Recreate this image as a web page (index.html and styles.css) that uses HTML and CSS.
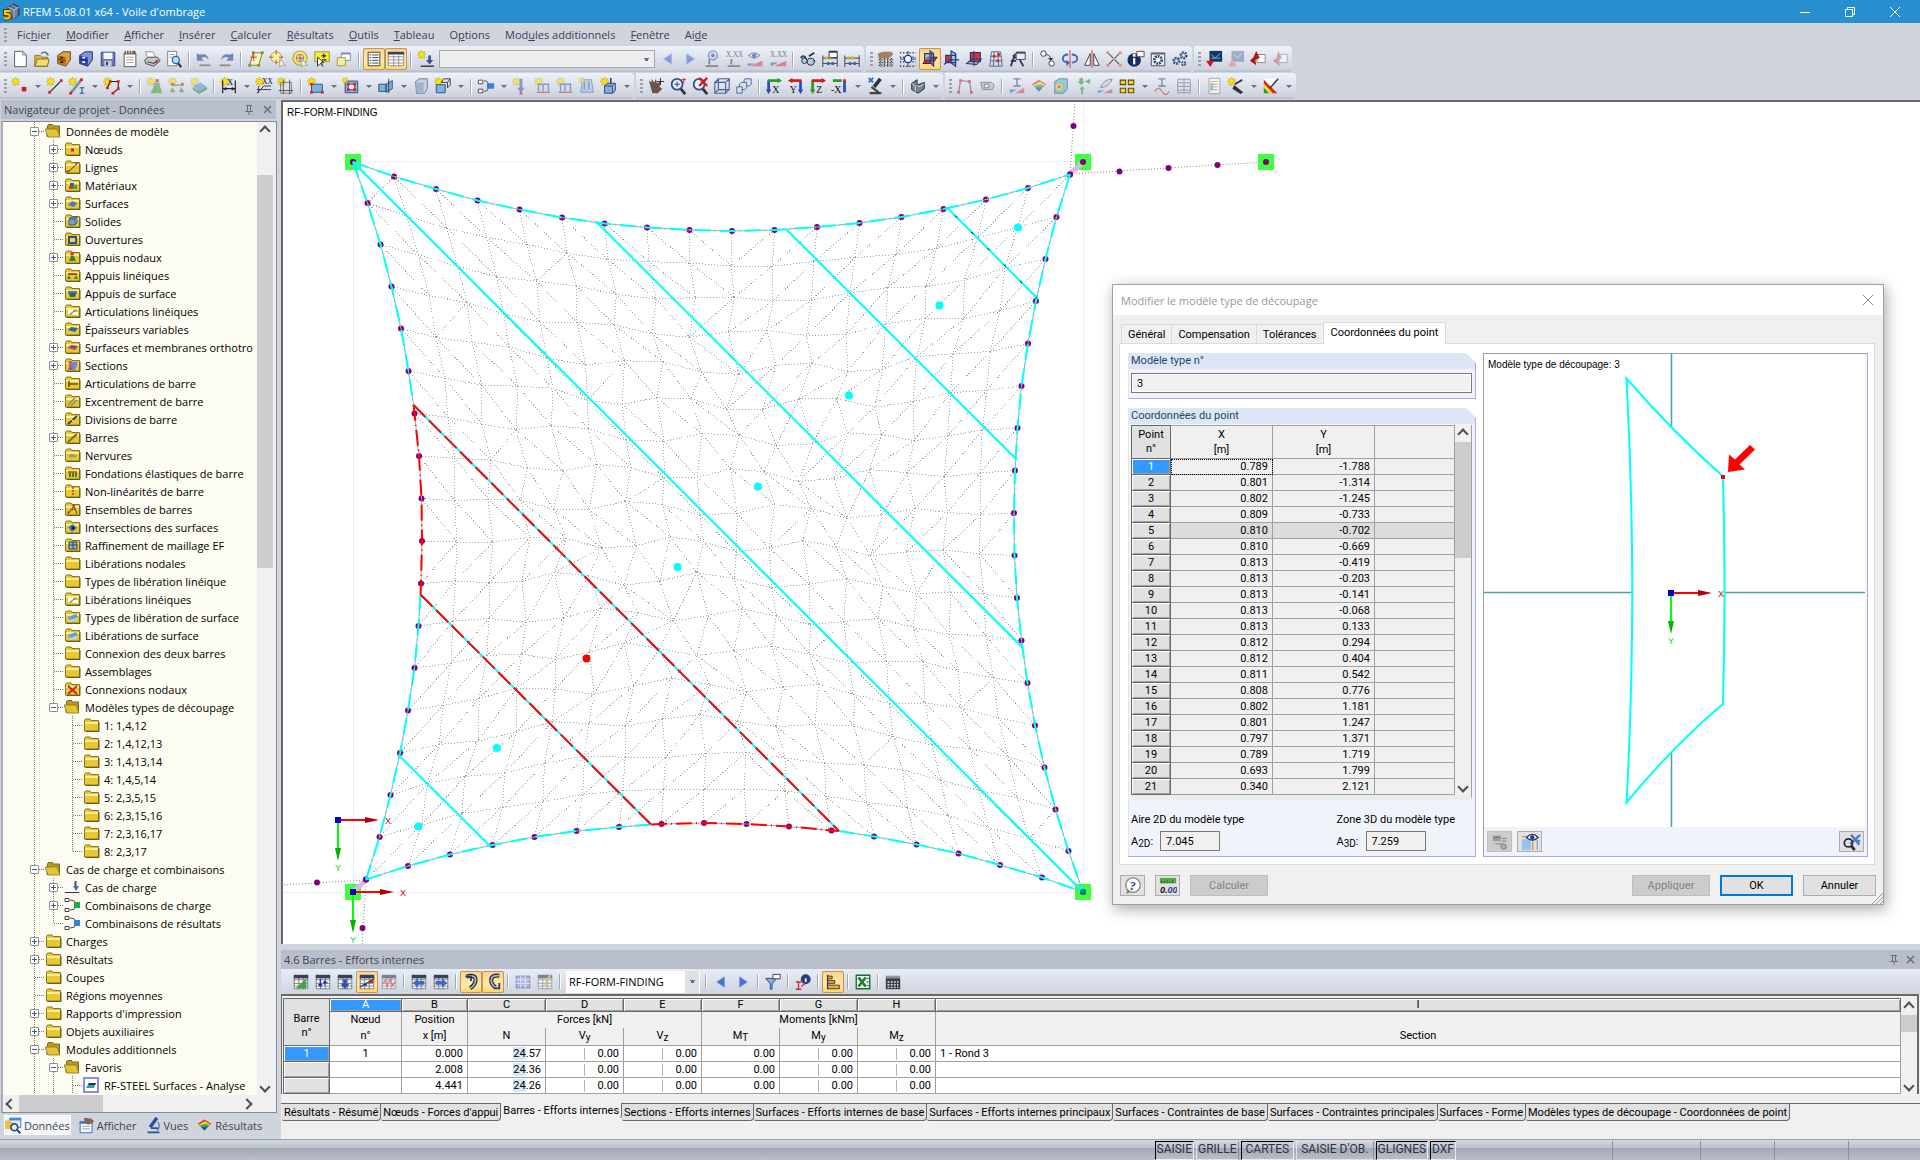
FILE: index.html
```
<!DOCTYPE html>
<html lang="fr">
<head>
    <meta charset="UTF-8">
    <meta name="viewport" content="width=device-width, initial-scale=1.0">
    <title>RFEM 5.08.01 x64 - Voile d'ombrage</title>
    <link rel="stylesheet" href="styles.css">
</head>
<body>
    <header class="titlebar">
        <svg class="app-icon" viewBox="0 0 18 18"><path d="M6 4l6-3 5 3v8l-5 4-6-3z" fill="#5b6b86" stroke="#2c3548"/><path d="M6 4l6 3 5-3M12 7v9" stroke="#b9c6da" fill="none"/><path d="M9 2l6 3M9 6v8M14 6v8" stroke="#8d9cb5"/><path d="M8 8H3v3h3q3 1 1 4-2 1-5 0" stroke="#4a3c00" stroke-width="4" fill="none"/><path d="M8 8H3v3h3q3 1 1 4-2 1-5 0" stroke="#ffc800" stroke-width="2" fill="none"/></svg>
        <span class="titlebar-text">RFEM 5.08.01 x64 - Voile d'ombrage</span>
        <button class="win-btn" aria-label="Réduire"><svg width="12" height="12"><path d="M1 6.5h10" stroke="#fff"/></svg></button>
        <button class="win-btn" aria-label="Restaurer"><svg width="12" height="12"><path d="M3.500 3.500v-2h7v7h-2M1.500 3.500h7v7h-7z" stroke="#fff" fill="none"/></svg></button>
        <button class="win-btn" aria-label="Fermer"><svg width="12" height="12"><path d="M1 1l10 10M11 1L1 11" stroke="#fff" fill="none"/></svg></button>
    </header>

    <nav class="menu">
        <span class="grip"></span>
        <button>Fic<u>h</u>ier</button>
        <button><u>M</u>odifier</button>
        <button><u>A</u>fficher</button>
        <button><u>I</u>nsérer</button>
        <button><u>C</u>alculer</button>
        <button><u>R</u>ésultats</button>
        <button><u>O</u>utils</button>
        <button><u>T</u>ableau</button>
        <button>O<u>p</u>tions</button>
        <button>Mod<u>u</u>les additionnels</button>
        <button><u>F</u>enêtre</button>
        <button>Ai<u>d</u>e</button>
    </nav>

    <div class="bar">
        <div class="band">
            <div class="tools" data-tools="new open box boxblue save clip print preview | undo redo | para pick ring note wins | *list *table | load"></div>
            <select class="combo combo-main" aria-label="Cas de charge"><option></option></select>
            <div class="tools" data-tools="~prev ~next ~eyeload ~xload ~eyered ~xred | glasses abacuswin abacus"></div>
        </div>
        <div class="band">
            <div class="tools" data-tools="hand gridc *planered planetwo planefill meshgrid props | copy rotate mirror cross info calc gears"></div>
        </div>
        <div class="band">
            <div class="tools" data-tools="modred ~modpink redout ~redpink"></div>
        </div>
    </div>
    <div class="bar">
        <div class="band">
            <div class="tools" data-tools="node v line member v poly v | ~support ~lsupport ~ssupport | dim v dimx section | surf v opening v sweep v solid solidset v | combi v ~nload ~lload ~lload ~sload cubeload v"></div>
        </div>
        <div class="band">
            <div class="tools" data-tools="pan zoomin zoomx cube cubes | axx axy axz axmx v scope v | solidgrey v"></div>
        </div>
        <div class="band">
            <div class="tools" data-tools="~deform ~cam | ~ibeam ~rainbow ~raincube ~greens ~leaf yellows v ~idiag ~tablegrid | ~doc wand v colors v"></div>
        </div>
    </div>

    <main class="workspace">
        <aside class="navigator">
            <div class="pane-title">
                <span>Navigateur de projet - Données</span>
                <svg width="36" height="14"><path d="M8 2.500h6M9.500 2v6M12.500 2v6M7 8.500h8M11 8v4" stroke="#6a6e78" fill="none"/><path d="M26 3l7 7M33 3l-7 7" stroke="#6a6e78" stroke-width="1.500"/></svg>
            </div>
            <div class="tree-frame">
                <div class="tree-row">
                    <div class="tree" id="tree" role="tree"></div>
                    <div class="vscroll">
                        <button class="arrow up" aria-label="Haut"></button>
                        <div class="thumb nav-thumb"></div>
                        <button class="arrow down" aria-label="Bas"></button>
                    </div>
                </div>
                <div class="hscroll">
                    <button class="arrow left" aria-label="Gauche"></button>
                    <div class="thumb"></div>
                    <button class="arrow right" aria-label="Droite"></button>
                </div>
            </div>
            <div class="nav-tabs">
                <button class="nav-tab active"><i data-icon="tabdata"></i>Données</button>
                <button class="nav-tab"><i data-icon="tabview"></i>Afficher</button>
                <button class="nav-tab"><i data-icon="tabscope"></i>Vues</button>
                <button class="nav-tab"><i data-icon="rainbow"></i>Résultats</button>
            </div>
        </aside>

        <section class="content">
            <div class="viewport">
                <svg class="model" id="model"></svg>
                <span class="view-label">RF-FORM-FINDING</span>
            </div>

            <div class="results">
                <div class="pane-title">
                    <span>4.6 Barres - Efforts internes</span>
                    <svg width="36" height="14"><path d="M9 2.500h6M10.500 2v6M13.500 2v6M8 8.500h8M12 8v4" stroke="#6a6e78" fill="none"/><path d="M25 3l7 7M32 3l-7 7" stroke="#6a6e78" stroke-width="1.500"/></svg>
                </div>
                <div class="results-tools">
                    <div class="tools" data-tools="gtri garrow gdown *gdiag ~gred | gleft gright | *hook *hookback | ~gblue ~gedit |"></div>
                    <select class="combo combo-case" aria-label="Cas"><option>RF-FORM-FINDING</option></select>
                    <div class="tools" data-tools="| prev next | filter | infored | *bars | excel | calcu"></div>
                </div>
                <div class="sheet">
                    <table class="grid">
                        <colgroup><col class="c-head"><col class="c-a"><col class="c-b"><col class="c-n"><col class="c-n"><col class="c-n"><col class="c-n"><col class="c-n"><col class="c-n"><col></colgroup>
                        <thead>
                            <tr class="letters"><th class="corner" rowspan="3">Barre<br>n°</th><th class="sel">A</th><th>B</th><th>C</th><th>D</th><th>E</th><th>F</th><th>G</th><th>H</th><th>I</th></tr>
                            <tr class="names"><th>Nœud</th><th>Position</th><th colspan="3">Forces [kN]</th><th colspan="3">Moments [kNm]</th><th></th></tr>
                            <tr class="units"><th>n°</th><th>x [m]</th><th>N</th><th>V<sub>y</sub></th><th>V<sub>z</sub></th><th>M<sub>T</sub></th><th>M<sub>y</sub></th><th>M<sub>z</sub></th><th>Section</th></tr>
                        </thead>
                        <tbody>
                            <tr><th class="sel">1</th><td class="mid">1</td><td>0.000</td><td><b>24</b>.57</td><td class="tick">0.00</td><td class="tick">0.00</td><td>0.00</td><td class="tick">0.00</td><td class="tick">0.00</td><td class="txt">1 - Rond 3</td></tr>
                            <tr><th></th><td></td><td>2.008</td><td><b>24</b>.36</td><td class="tick">0.00</td><td class="tick">0.00</td><td>0.00</td><td class="tick">0.00</td><td class="tick">0.00</td><td></td></tr>
                            <tr><th></th><td></td><td>4.441</td><td><b>24</b>.26</td><td class="tick">0.00</td><td class="tick">0.00</td><td>0.00</td><td class="tick">0.00</td><td class="tick">0.00</td><td></td></tr>
                        </tbody>
                    </table>
                    <div class="vscroll">
                        <button class="arrow up" aria-label="Haut"></button>
                        <div class="thumb sheet-thumb"></div>
                        <button class="arrow down" aria-label="Bas"></button>
                    </div>
                </div>
                <div class="sheet-tabs">
                    <button>Résultats - Résumé</button>
                    <button>Nœuds - Forces d'appui</button>
                    <button class="active">Barres - Efforts internes</button>
                    <button>Sections - Efforts internes</button>
                    <button>Surfaces - Efforts internes de base</button>
                    <button>Surfaces - Efforts internes principaux</button>
                    <button>Surfaces - Contraintes de base</button>
                    <button>Surfaces - Contraintes principales</button>
                    <button>Surfaces - Forme</button>
                    <button>Modèles types de découpage - Coordonnées de point</button>
                </div>
            </div>
        </section>
    </main>

    <footer class="status">
        <span class="cell on">SAISIE</span>
        <span class="cell">GRILLE</span>
        <span class="cell on wide">CARTES</span>
        <span class="cell wide">SAISIE D'OB.</span>
        <span class="cell on">GLIGNES</span>
        <span class="cell on">DXF</span>
        <span class="blank blank-first"></span>
        <span class="blank blank-wide"></span>
        <span class="blank"></span>
        <span class="blank"></span>
        <span class="blank"></span>
    </footer>

    <div class="dialog" role="dialog" aria-labelledby="dialogTitle">
        <div class="dialog-title">
            <span id="dialogTitle">Modifier le modèle type de découpage</span>
            <button aria-label="Fermer"><svg width="12" height="12"><path d="M1 1l10 10M11 1L1 11" stroke="#8a8a8a" fill="none"/></svg></button>
        </div>
        <div class="dialog-tabs">
            <button>Général</button>
            <button>Compensation</button>
            <button>Tolérances</button>
            <button class="active">Coordonnées du point</button>
        </div>
        <div class="dialog-page">
            <div class="dialog-left">
                <div class="group">
                    <label class="group-title" for="modelNo">Modèle type n°</label>
                    <input class="model-no" id="modelNo" type="text" value="3" readonly>
                </div>
                <div class="group grow">
                    <div class="group-title">Coordonnées du point</div>
                    <div class="points-frame">
                        <table class="grid points">
                            <colgroup><col class="p-head"><col class="p-n"><col class="p-n"><col></colgroup>
                            <thead><tr><th class="corner">Point<br>n°</th><th><span>X</span>[m]</th><th><span>Y</span>[m]</th><th></th></tr></thead>
                            <tbody id="points"></tbody>
                        </table>
                        <div class="vscroll">
                            <button class="arrow up" aria-label="Haut"></button>
                            <div class="thumb points-thumb"></div>
                            <button class="arrow down" aria-label="Bas"></button>
                        </div>
                    </div>
                    <div class="areas">
                        <div class="area">
                            <span>Aire 2D du modèle type</span>
                            <div class="area-field"><label for="a2d">A<sub>2D</sub>:</label><input id="a2d" type="text" value="7.045" readonly></div>
                        </div>
                        <div class="area">
                            <span>Zone 3D du modèle type</span>
                            <div class="area-field"><label for="a3d">A<sub>3D</sub>:</label><input id="a3d" type="text" value="7.259" readonly></div>
                        </div>
                    </div>
                </div>
            </div>
            <div class="preview">
                <div class="preview-canvas">
                    <svg class="pattern" id="pattern"></svg>
                    <span class="view-label">Modèle type de découpage: 3</span>
                </div>
                <div class="preview-tools">
                    <button class="icon-btn off" aria-label="Points"><i data-icon="pvgrey"></i></button>
                    <button class="icon-btn" aria-label="Affichage"><i data-icon="pveye"></i></button>
                    <button class="icon-btn last" aria-label="Tout afficher"><i data-icon="pvzoom"></i></button>
                </div>
            </div>
        </div>
        <div class="dialog-footer">
            <button class="icon-btn" aria-label="Aide"><i data-icon="help"></i></button>
            <button class="icon-btn" aria-label="Unités"><i data-icon="units"></i></button>
            <button class="push" disabled>Calculer</button>
            <span class="spacer"></span>
            <button class="push" disabled>Appliquer</button>
            <button class="push primary">OK</button>
            <button class="push narrow">Annuler</button>
        </div>
        <svg class="resize-grip" width="12" height="12"><path d="M1 12L12 1M5 12l7-7M9 12l3-3" stroke="#999"/></svg>
    </div>

    <script src="script.js"></script>
</body>
</html>
```

FILE: styles.css
```
* {
    box-sizing: border-box;
}

body {
    margin: 0;
    height: 100vh;
    display: flex;
    flex-direction: column;
    overflow: hidden;
    position: relative;
    background: #d0d4dd;
    color: #000;
    font-family: "Open Sans", sans-serif;
    font-size: 11px;
}

button, input, select {
    font: inherit;
    color: inherit;
    border: none;
    padding: 0;
    margin: 0;
    background: none;
    white-space: nowrap;
}

/* title bar */
.titlebar {
    height: 23px;
    flex: none;
    display: flex;
    align-items: center;
    background: #278fd0;
    color: #fff;
    padding: 0 3px 0 2px;
}

.app-icon {
    width: 18px;
    height: 18px;
    margin-right: 3px;
}

.titlebar-text {
    flex: 1;
}

.win-btn {
    width: 45px;
    height: 21px;
    display: flex;
    align-items: center;
    justify-content: center;
}

/* menu */
.menu {
    height: 23px;
    flex: none;
    display: flex;
    align-items: center;
    gap: 15px;
    color: #3c4258;
}

.menu .grip {
    margin-right: -5px;
}

.grip {
    width: 3px;
    height: 14px;
    margin-left: 4px;
    background: repeating-linear-gradient(#9aa0ae 0 2px, transparent 2px 4px);
}

/* toolbars */
.bar {
    height: 26px;
    flex: none;
    display: flex;
    gap: 2px;
    margin-bottom: 1px;
}

.band {
    display: flex;
    align-items: center;
    height: 26px;
    padding-right: 1px;
    border-radius: 0 4px 4px 0;
    background: linear-gradient(#eef2fa, #dde2ec 45%, #cdd2de 90%, #b4b9c4);
}

.band::before {
    content: "";
    width: 3px;
    height: 15px;
    margin: 0 2px 0 4px;
    background: repeating-linear-gradient(#9aa0ae 0 2px, transparent 2px 4px);
}

.tools {
    display: flex;
    align-items: center;
}

.tool {
    width: 22px;
    height: 22px;
    display: flex;
    align-items: center;
    justify-content: center;
    border-radius: 2px;
}

.tool svg {
    width: 18px;
    height: 18px;
}

.tool.on {
    background: linear-gradient(#fbd08b, #ffe9a8 60%, #ffd565);
    box-shadow: inset 0 0 0 1px #c2955a;
}

.tool.off svg {
    opacity: 0.6;
}

.sep {
    width: 2px;
    height: 15px;
    margin: 0 3px;
    background: linear-gradient(90deg, #a3a9b6 50%, #fff 50%);
}

.drop {
    width: 13px;
    display: flex;
    justify-content: center;
}

.drop::before {
    content: "";
    border: 3px solid transparent;
    border-top-color: #6b6f79;
    border-bottom: 0;
}

.combo {
    appearance: none;
    height: 18px;
    margin: 0 2px;
    padding: 0 4px;
    border: 1px solid #a6a9b0;
    border-radius: 0;
    background-color: #eee;
    background-image: linear-gradient(#6b6f79, #6b6f79), linear-gradient(#6b6f79, #6b6f79);
    background-size: 5px 1px, 3px 2px;
    background-position: right 5px top 7px, right 6px top 8px;
    background-repeat: no-repeat;
}

.combo-main {
    width: 216px;
}

.combo-case {
    width: 134px;
    height: 22px;
    padding: 0 3px;
    border: none;
    background-color: #fff;
    background-image: linear-gradient(#6b6f79, #6b6f79), linear-gradient(#6b6f79, #6b6f79), linear-gradient(#dfe1e6, #dfe1e6);
    background-size: 5px 1px, 3px 2px, 14px 22px;
    background-position: right 5px top 9px, right 6px top 10px, right 1px top 0;
}

/* workspace */
.workspace {
    flex: 1;
    min-height: 0;
    display: flex;
}

.navigator {
    width: 281px;
    flex: none;
    display: flex;
    flex-direction: column;
    padding-left: 1px;
}

.pane-title {
    height: 19px;
    flex: none;
    display: flex;
    align-items: center;
    justify-content: space-between;
    padding: 0 2px 0 3px;
    background: #b9bfca;
    color: #3f4452;
}

.navigator .pane-title {
    margin: 0 5px 2px 0;
}

.tree-frame {
    flex: 1;
    min-height: 0;
    display: flex;
    flex-direction: column;
    margin: 0 4px 3px 0;
    padding: 0 3px 0 0;
    border: 1px solid #858b9c;
    border-left: 2px solid #a9aebb;
    background: #f0f0f0;
}

.tree-row {
    flex: 1;
    min-height: 0;
    display: flex;
}

.tree {
    flex: 1;
    min-width: 0;
    overflow: hidden;
    background: #fdfcf3;
}

.node {
    height: 18px;
    padding-left: 22px;
    display: flex;
    align-items: center;
    white-space: nowrap;
}

.guide {
    width: 19px;
    height: 18px;
    flex: none;
    position: relative;
    display: flex;
    align-items: center;
    justify-content: center;
}

.guide.through {
    background: repeating-linear-gradient(#777 0 1px, transparent 1px 2px) 9px 0 / 1px 18px no-repeat;
}

.guide.end {
    background: repeating-linear-gradient(#777 0 1px, transparent 1px 2px) 9px 0 / 1px 10px no-repeat;
}

.guide.branch::after {
    content: "";
    width: 9px;
    height: 1px;
    position: absolute;
    left: 10px;
    top: 9px;
    background: repeating-linear-gradient(90deg, #777 0 1px, transparent 1px 2px);
}

.toggle {
    width: 9px;
    height: 9px;
    position: relative;
    z-index: 1;
    border: 1px solid #919191;
    border-radius: 1px;
    background: linear-gradient(#3a5a9c, #3a5a9c) center / 5px 1px no-repeat #fff;
}

.toggle.plus {
    background: linear-gradient(#3a5a9c, #3a5a9c) center / 5px 1px no-repeat, linear-gradient(#3a5a9c, #3a5a9c) center / 1px 5px no-repeat #fff;
}

.node svg {
    width: 17px;
    height: 16px;
    flex: none;
    margin: 0 4px 0 1px;
}

/* scrollbars */
.vscroll {
    width: 16px;
    flex: none;
    display: flex;
    flex-direction: column;
    background: #f0f0f0;
}

.hscroll {
    height: 17px;
    flex: none;
    display: flex;
    margin-right: 18px;
}

.thumb {
    background: #cdcdcd;
}

.hscroll .thumb {
    width: 84px;
}

.nav-thumb {
    height: 393px;
    margin-top: 36px;
}

.sheet-thumb {
    height: 17px;
}

.points-thumb {
    height: 116px;
}

.arrow {
    width: 16px;
    height: 17px;
    display: flex;
    align-items: center;
    justify-content: center;
}

.arrow::before {
    content: "";
    width: 6px;
    height: 6px;
    border: 2px solid #505050;
    border-right: none;
    border-bottom: none;
    transform: rotate(45deg);
}

.arrow.down {
    margin-top: auto;
}

.arrow.right {
    margin-left: auto;
}

.arrow.down::before {
    transform: rotate(225deg);
}

.arrow.left::before {
    transform: rotate(-45deg);
}

.arrow.right::before {
    transform: rotate(135deg);
}

/* navigator tabs */
.nav-tabs {
    height: 23px;
    flex: none;
    display: flex;
    align-items: flex-start;
    gap: 8px;
    padding-left: 4px;
    color: #3f4452;
}

.nav-tab {
    height: 18px;
    display: flex;
    align-items: center;
    gap: 2px;
}

.nav-tab.active {
    background: #f3f5f9;
    box-shadow: 0 0 0 1px #fff;
}

.nav-tab svg {
    width: 17px;
    height: 17px;
    display: block;
}

/* model view */
.content {
    flex: 1;
    min-width: 0;
    display: flex;
    flex-direction: column;
}

.viewport {
    flex: 1;
    min-height: 0;
    position: relative;
    border: 1px solid #696969;
    border-width: 2px 0 0 2px;
    background: #fff;
    overflow: hidden;
}

.model, .pattern {
    width: 100%;
    height: 100%;
    display: block;
}

.view-label {
    position: absolute;
    left: 4px;
    top: 4px;
    font-family: "Liberation Sans", sans-serif;
    font-size: 10px;
    line-height: 14px;
}

.axis-text {
    font-family: "Liberation Sans", sans-serif;
    font-size: 9px;
    text-anchor: middle;
}

/* results panel */
.results {
    flex: none;
    margin-top: 6px;
    display: flex;
    flex-direction: column;
    background: #f0f0f0;
}

.results-tools {
    height: 25px;
    display: flex;
    align-items: center;
    padding-left: 9px;
    background: linear-gradient(#e8ecf6, #cfd4df);
}

.sheet {
    display: flex;
    margin: 0 1px 9px 0;
    padding: 2px 0 0 1px;
    border: 1px solid #696969;
    border-width: 2px 2px 0 1px;
}

.grid {
    flex: 1;
    table-layout: fixed;
    width: 0;
    border-collapse: collapse;
    font-family: Roboto, sans-serif;
    font-size: 11px;
    line-height: 14px;
}

.grid th {
    font-weight: normal;
    padding: 0;
    border: 1px solid #a0a0a0;
    background: #f0f0f0;
}

.grid td {
    height: 16px;
    padding: 0 4px;
    text-align: right;
    border: 1px solid #a0a0a0;
    background: #fff;
}

.grid tbody th, .grid .letters th, .grid th.corner {
    background: #e1e1e1;
    border-color: #696969;
}

.grid tbody th, .grid .letters th {
    box-shadow: inset 1px 1px 0 #fff, inset -1px -1px 0 #a0a0a0;
}

.grid th.corner {
    box-shadow: none;
}

.grid tbody th.sel, .grid .letters th.sel {
    background: #3399ff;
    color: #fff;
}

.grid .letters th {
    line-height: 12px;
}

.grid .letters th.corner {
    line-height: 14px;
    padding-top: 8px;
}

.grid .names th {
    height: 16px;
    border-bottom: none;
}

.grid .units th {
    height: 18px;
    border-top: none;
}

.grid sub {
    font-size: 10px;
    line-height: 0;
    vertical-align: -2px;
}

.grid td.mid {
    text-align: center;
    padding-right: 4px;
}

.grid td.txt {
    text-align: left;
}

.grid td b {
    font-weight: normal;
    background: #dbe5f8;
}

.grid td.tick {
    background: linear-gradient(#b4b4b4, #b4b4b4) center / 1px 12px no-repeat #fff;
}

.c-head { width: 46px; }
.c-a { width: 72px; }
.c-b { width: 66px; }
.c-n { width: 78px; }

.sheet-tabs {
    height: 36px;
    display: flex;
    align-items: flex-start;
    padding-left: 1px;
    border-top: 1px solid #696969;
    font-family: Roboto, sans-serif;
}

.sheet-tabs button {
    height: 17px;
    padding: 0 2px;
    border: 1px solid #696969;
    border-width: 0 1px 1px 0;
    border-radius: 0 0 4px 2px;
    background: #e1e1e1;
}

.sheet-tabs button.active {
    height: 16px;
    margin-top: -1px;
    background: #f0f0f0;
    border-bottom-color: #f0f0f0;
}

/* status bar */
.status {
    height: 21px;
    flex: none;
    display: flex;
    align-items: stretch;
    justify-content: flex-end;
    gap: 2px;
    padding-top: 1px;
    border-top: 1px solid #9a9fa9;
    background: linear-gradient(#d3d8e0, #bcc2cc 40%, #a3a9b4 42%, #b9bec8);
    color: #2f3340;
    font-family: Roboto, sans-serif;
    font-size: 12px;
}

.cell {
    padding: 0 1px;
    line-height: 15px;
    border: 1px solid #dfe2e8;
    border-right-color: #8c919b;
}

.cell.on {
    border-color: #000 #e8eaee #e8eaee #000;
}

.cell.wide {
    padding: 0 4px;
}

.blank {
    width: 72px;
    border-left: 1px solid #8c919b;
}

.blank-wide {
    width: 86px;
}

.blank-first {
    width: 152px;
    border: none;
}

/* dialog */
.dialog {
    position: absolute;
    right: 36px;
    top: 284px;
    width: 772px;
    display: flex;
    flex-direction: column;
    border: 1px solid #a0a0a0;
    background: #f0f0f0;
    box-shadow: 2px 4px 14px rgba(0, 0, 0, 0.35);
    font-family: Roboto, sans-serif;
}

.dialog-title {
    height: 30px;
    display: flex;
    align-items: center;
    justify-content: space-between;
    padding: 0 9px 0 8px;
    background: #fff;
    color: #999;
    font-family: "Open Sans", sans-serif;
}

.dialog-title svg {
    display: block;
}

.dialog-tabs {
    display: flex;
    align-items: flex-end;
    padding: 7px 8px 0;
}

.dialog-tabs button {
    height: 19px;
    padding: 0 6px;
    border: 1px solid #d9d9d9;
    border-width: 1px 1px 0 1px;
    margin-right: -1px;
}

.dialog-tabs button.active {
    height: 22px;
    padding: 0 7px 3px;
    margin-bottom: -1px;
    background: #fff;
    position: relative;
}

.dialog-page {
    display: flex;
    gap: 7px;
    margin: 0 8px 0 6px;
    padding: 9px 6px 7px 8px;
    height: 522px;
    border: 1px solid #dcdcdc;
    background: #fff;
}

.dialog-left {
    width: 348px;
    display: flex;
    flex-direction: column;
    gap: 9px;
}

.group {
    display: flex;
    flex-direction: column;
    padding: 0 3px 5px 2px;
    border: 1px solid #a9a9e6;
    border-left-color: #dce6f4;
    border-top: none;
    background: #f0f4fa;
    clip-path: polygon(0 0, calc(100% - 10px) 0, 100% 10px, 100% 100%, 0 100%);
}

.group.grow {
    flex: 1;
}

.group-title {
    height: 16px;
    line-height: 16px;
    margin: 0 -3px 1px -2px;
    padding-left: 2px;
    background: #dce6f4;
    color: #1e4669;
}

.model-no {
    height: 20px;
    margin-top: 3px;
    padding: 0 5px;
    border: 1px solid #7a7a7a;
    background: #f0f0f0;
    box-shadow: inset 0 0 0 1px #fff;
}

.points-frame {
    display: flex;
    border-right: 1px solid #a0a0a0;
    border-bottom: 5px solid #e8eeee;
}

.points td {
    background: #f0f0f0;
}

.points tr.alt td {
    background: #dcdcdc;
}

.points td.focus {
    outline: 1px dotted #000;
    outline-offset: -1px;
}

.points thead th {
    height: 33px;
    line-height: 14px;
}

.points thead span {
    display: block;
    line-height: 16px;
}

.p-head { width: 39px; }
.p-n { width: 102px; }

.areas {
    display: flex;
    justify-content: space-between;
    padding: 12px 17px 0 0;
}

.area {
    display: flex;
    flex-direction: column;
    gap: 3px;
}

.area > span {
    line-height: 16px;
}

.area-field {
    display: flex;
    align-items: center;
    gap: 7px;
}

.area sub {
    font-size: 10px;
    line-height: 0;
    vertical-align: -2px;
}

.area input {
    width: 60px;
    height: 20px;
    padding: 0 5px;
    border: 1px solid #7a7a7a;
    background: #f0f0f0;
}

.preview {
    flex: 1;
    display: flex;
    flex-direction: column;
    border: 1px solid #a9a9e6;
    border-left-color: #a0a0a0;
    border-top-color: #a0a0a0;
    background: #f0f4fa;
}

.preview-canvas {
    flex: 1;
    position: relative;
    margin-right: 2px;
    overflow: hidden;
    background: #fff;
}

.preview-tools {
    height: 29px;
    display: flex;
    align-items: center;
    gap: 5px;
    padding: 0 3px;
}

.icon-btn {
    width: 25px;
    height: 21px;
    display: flex;
    align-items: center;
    justify-content: center;
    border: 1px solid #adadad;
    background: #e1e1e1;
}

.icon-btn svg {
    width: 18px;
    height: 18px;
    display: block;
}

.icon-btn.off {
    background: #ccc;
    border-color: #bfbfbf;
}

.icon-btn.last {
    margin-left: auto;
}

.dialog-footer {
    display: flex;
    gap: 10px;
    padding: 10px 7px 8px;
}

.spacer {
    flex: 1;
}

.push {
    width: 78px;
    height: 21px;
    border: 1px solid #adadad;
    background: #e1e1e1;
}

.push:disabled {
    border-color: #bfbfbf;
    background: #ccc;
    color: #838383;
}

.push.primary, .push.narrow {
    width: 73px;
}

.push.primary {
    border: 2px solid #0078d7;
}

.resize-grip {
    position: absolute;
    right: 0;
    bottom: 0;
}
```

FILE: script.js
```
// small helpers for the icon set
const S = (d, color, w = 1.5, fill = 'none') => `<path d="${d}" stroke="${color}" stroke-width="${w}" fill="${fill}"/>`;
const F = (d, fill) => `<path d="${d}" fill="${fill}"/>`;
const dots = (pts, color = '#e02020') => pts.map(p => `<rect x="${p[0] - 1.5}" y="${p[1] - 1.5}" width="3" height="3" fill="${color}"/>`).join('');
const star = '<path d="M5 0l1.200 3L9 1.500 7.500 4.200 10 5 7.500 6 9 9 6 7.500 5 10 4 7.500 1.500 9 2.800 6 0 5l2.800-1L1.500 1.500 4 3z" fill="#ffe600" stroke="#b99a00" stroke-width=".5"/>';
const sheet = S('M2.500 3.500h15v14h-15zM2 7.500h15M2 11.500h15M2 14.500h15M7.500 4v14M12.500 4v14', '#777', 1, '#fff') + F('M2 2h16v4H2z', '#34405e');
const eye = S('M2 6q6-6 12 0q-6 6-12 0z', '#3a5a9c', 1.2, '#fff') + '<circle cx="8" cy="6" r="2.500" fill="#2b4c94"/>';
const xxx = '<text x="1" y="8" font-size="8" font-family="Liberation Serif" fill="#333">X.XX</text>';
const axes = (a, b, t) => S('M4 4v12', b, 3) + S('M3 4h13', a, 3) + F('M1 14h6l-3 5z', b) + F('M14 1v6l5-3z', a) +
    `<text x="8" y="18" font-size="11" font-family="Liberation Serif" fill="#111">${t}</text>`;
const beam = S('M6 2h8M10 2v8M6 10h8', '#33508f', 1.5);
const abacusBody = S('M2 6v13M18 6v13M2 9h16M2 15h16', '#555', 1.2) + '<circle cx="6" cy="9" r="2" fill="#d2b13c"/><circle cx="11" cy="9" r="2" fill="#d2b13c"/><circle cx="8" cy="15" r="2" fill="#3c66ad"/><circle cx="13" cy="15" r="2" fill="#3c66ad"/>';
const lens = c => S('M13 13l5 6', '#333', 3) + `<circle cx="9" cy="8" r="6" fill="#e4f0fb" stroke="${c}" stroke-width="2"/>`;
const loadArrow = S('M10 2v12', '#4769b8', 3) + F('M6 12h8l-4 6z', '#4769b8');

const icons = {
    new: S('M4 1.500h9l4 4v13H4z', '#555', 1, '#fff') + S('M13 1.500v4h4', '#777', 1),
    open: S('M2 6h6l2 2h6v10H2z', '#8a7320', 1, '#d8b83a') + S('M2 18l3-8h13l-2 8z', '#7c6616', 1, '#f3dc6b') + S('M9 4q5-4 8 2', '#2f66c0', 1.5),
    box: S('M3 6l6-4h8v9l-5 7-9-3z', '#4d3512', 1, '#e0a040') + F('M3 6l9 2v10l-9-3z', '#b9741d') + S('M3 10l9 2', '#5c3a0c', 1) + S('M6 8.500h3M6 13.500h3', '#2d1f08', 2),
    boxblue: S('M3 6l6-4h8v9l-5 7-9-3z', '#1c2450', 1, '#8093e0') + F('M3 6l9 2v10l-9-3z', '#2d47a4') + S('M3 10l9 2', '#141c4c', 1) + S('M6 8.500h3M6 13.500h3', '#fff', 2),
    save: S('M2.500 2.500h15v15h-15z', '#33386b', 1, '#6d78bb') + F('M5 3h10v7H5z', '#f5f5fa') + F('M6 12h8v6H6z', '#c9cde0') + F('M8 13h2v4H8z', '#333'),
    clip: S('M3.500 3.500h13v15h-13z', '#5a4a34', 1, '#fff') + F('M4 1h12v4H4z', '#6f5b3e') + S('M6 1v3M9 1v3M12 1v3', '#fff', 1) + S('M6 8h8M6 11h8M6 14h8', '#999', 1),
    print: S('M5 9l-2-7h8l3 7z', '#888', 1, '#fff') + S('M2 11l4-3h10l3 4-7 6-9-3z', '#444', 1, '#c4c8cf') + S('M5 13l7 2 5-4', '#444', 1.2) + dots([[15, 13]], '#d33'),
    preview: S('M3 1.500h10v16H3z', '#777', 1, '#fff') + S('M5 5h6M5 8h5', '#999', 1) + S('M14 14l4 5', '#333', 2.5) + '<circle cx="12" cy="11" r="4" fill="#bcdcf7" stroke="#3568a8" stroke-width="1.500"/>',
    undo: F('M2 4v8h8L7 9q5-3 8 2 0-8-10-6z', '#6f87b8') + S('M5 17h12', '#8f8f8f', 2),
    redo: F('M18 4v8h-8l3-3q-5-3-8 2 0-8 10-6z', '#6f87b8') + S('M3 17h12', '#8f8f8f', 2),
    para: S('M7 3h10l-4 14H3z', '#8b8a2c', 1.2, '#f6f3c4') + dots([[7, 3], [17, 3], [3, 17], [13, 17]], '#8b8a2c') + S('M4 8h7M7.500 4v8', '#d22', 1),
    pick: '<circle cx="8" cy="8" r="6" fill="#f7efa0" stroke="#a69b3c"/>' + S('M8 0v5M8 11v5M0 8h5M11 8h5', '#c33', 1) + S('M12 10v9l2-2h4z', '#999', 1, '#fff'),
    ring: '<circle cx="10" cy="9" r="6" fill="none" stroke="#a69b3c" stroke-width="5"/><circle cx="10" cy="9" r="6" fill="none" stroke="#f2e468" stroke-width="3"/>' + S('M10 5v8M6 9h8', '#b44', 1) + S('M12 10v9l2-2h4z', '#999', 1, '#fff'),
    note: S('M2 2h16v11H2z', '#9c8f12', 1, '#f8ec42') + S('M12 4v5M9.500 6.500h5M10 11h5', '#222', 1.2) + S('M5 8v10l3-3 3 3-2-4h3z', '#222', 1, '#fff'),
    wins: S('M7 3.500h10v8H7z', '#888', 1, '#fff') + S('M2.500 8.500h9v9h-9z', '#9a9445', 1, '#f4eda0') + F('M7 3h10v2H7z', '#8791ad'),
    list: S('M3.500 2.500h13v15h-13z', '#333', 1, '#fff') + S('M5 5.500h2M5 8.500h2M5 11.500h2M5 14.500h2M8 5.500h7M8 8.500h7M8 11.500h7M8 14.500h7', '#333', 1),
    table: S('M1.500 3.500h17v14h-17zM1 7.500h17M1 11h17M1 14.500h17M7.500 6v12M13 6v12', '#8b8b8b', 1, '#fff') + F('M1 2h18v3H1z', '#34405e'),
    load: star + S('M14 6v6', '#34569a', 3) + F('M10 11h8l-4 5z', '#34569a') + S('M4 18h15', '#333', 1.5),
    prev: F('M14 4v12L5 10z', '#4a6fd0') + S('M14 4v12L5 10z', '#8ba6e6', 1),
    next: F('M6 4v12l9-6z', '#4a6fd0') + S('M6 4v12l9-6z', '#8ba6e6', 1),
    eyeload: S('M7 10v6M3 18h14', '#555', 2) + '<circle cx="11" cy="6" r="5" fill="#c6d6ee" stroke="#4f6690" stroke-width="1.500"/><circle cx="11" cy="6" r="2" fill="#2b4c94"/>',
    xload: xxx + S('M7 10v6M3 18h14', '#555', 2),
    eyered: eye + F('M3 18l14-6v6z', '#e05060') + F('M1 18v-3h8z', '#4769b8'),
    xred: xxx + F('M5 18l14-6v6z', '#e05060') + F('M2 18v-4l8 0z', '#4769b8'),
    glasses: S('M2 9q3-5 6 1M11 7l6-4M13 14l5-2', '#333', 2) + '<circle cx="6" cy="12" r="3" fill="#b8c8e8" stroke="#222"/><circle cx="13" cy="13" r="4" fill="#b8c8e8" stroke="#222"/>',
    abacuswin: abacusBody + S('M9 1.500h9v7H9z', '#333', 1, '#fff') + F('M9 1h9v2H9z', '#333'),
    abacus: abacusBody,
    hand: S('M2 11h16M2 14h16M2 17h16M4 9v10M8 9v10M12 9v10M16 9v10', '#444', 1.5).replace('/>', ' stroke-dasharray="1.500 1.500"/>') + F('M1 4l6-2h9l2 3-6 5-5-1-5 1z', '#a87e60'),
    gridc: S('M1 3h18M1 8h18M1 13h18M1 18h18', '#444', 1.5).replace('/>', ' stroke-dasharray="1.500 2"/>') + S('M10 1v18M1 10h18', '#1838a0', 1) + '<circle cx="10" cy="10" r="4" fill="#fff" stroke="#1838a0" stroke-width="1.500"/>',
    planered: S('M2 15l5-7h11l-5 7z', '#600', 1, '#e03030') + S('M4 4h8v8H4zM10 1l4 3v14l-4-4z', '#1e3f80', 1.3, 'rgba(120,170,220,.5)'),
    planetwo: F('M3 6h7v8H3z', '#e03030') + S('M9 1l5 3v14l-5-4z', '#1e3f80', 1.3, 'rgba(120,170,220,.6)') + S('M3 6h11v8H3zM1 16l7-5h10', '#1e3f80', 1.3),
    planefill: S('M6 3h11v10H6z', '#1e3f80', 1.3, '#e03030') + S('M2 15l6-5h10l-5 6zM10 1v17', '#1e3f80', 1.3),
    meshgrid: S('M5 2l-2 16h14L15 2zM8 2l-1 16M12 2l1 16M4 7h12M4 12h13', '#4f6689', 1) + dots([[8, 7], [12, 12], [13, 5]]),
    props: S('M2 18l5-14M4 6l4 3M2 12h6M12 11l4 7', '#335', 2) + S('M8 2.500h10v8H8z', '#444', 1, '#e6ecf7') + F('M8 2h10v2H8z', '#444'),
    copy: '<circle cx="5" cy="4" r="3" fill="#fff" stroke="#333"/><circle cx="14" cy="15" r="3" fill="#fff" stroke="#333"/>' + S('M8 5q5 1 5 5', '#333', 1) + F('M10 9h6l-3 3z', '#333'),
    rotate: S('M8 5C0 5 0 14 8 14M12 5c8 0 8 9 0 9', '#4463a8', 2) + S('M10 0v20', '#d33', 1) + F('M6 11l4 3-4 4z', '#4463a8'),
    mirror: S('M8 4v13H2zM12 4v13h6z', '#333', 1, '#fff') + S('M10 0v20', '#d33', 1),
    cross: S('M3 3l14 14M17 3L3 17', '#555', 1.2) + dots([[3, 3], [17, 3], [3, 17], [17, 17], [10, 10]], '#e88'),
    info: '<circle cx="8" cy="11" r="7.500" fill="#1c2a63"/>' + S('M8 9v7', '#fff', 2.5) + dots([[8, 6]], '#fff') + S('M11 1.500h8v6h-8z', '#444', 1, '#fff'),
    calc: S('M2.500 3.500h15v14h-15z', '#444', 1, '#eee') + F('M2 3h16v2H2z', '#666') + '<circle cx="10" cy="11" r="4" fill="#fff" stroke="#247" stroke-width="3" stroke-dasharray="2 1"/>',
    gears: '<circle cx="6" cy="12" r="3" fill="none" stroke="#3a4f80" stroke-width="3" stroke-dasharray="2 1"/><circle cx="14" cy="6" r="3" fill="none" stroke="#3a4f80" stroke-width="3" stroke-dasharray="2 1"/><circle cx="14" cy="15" r="2" fill="none" stroke="#3a4f80" stroke-width="2" stroke-dasharray="2 1"/>',
    modred: F('M5 1h14v12H5z', '#12375f') + S('M7 5l4 4 6-5M7 9h10', '#7fb9e8', 1) + F('M1 12h9l-4 7z', '#d81818'),
    modpink: F('M5 1h14v12H5z', '#7089a8') + S('M7 5l4 4 6-5', '#cde', 1) + F('M1 18h10L6 10z', '#e78888'),
    redout: S('M9 5h9v9H9z', '#888', 1, '#fff') + F('M8 1l4 8-5 2 1 6-7-5 4-4z', '#b01818'),
    redpink: S('M9 5h9v9H9z', '#888', 1, '#fff') + F('M8 1l4 8-4 3 2 6-8-6 4-3z', '#d07070'),
    node: star + F('M12 11h5v5h-5z', '#d81818'),
    line: star + S('M4 17L17 4', '#222', 1.3) + dots([[4, 17], [17, 4]]),
    member: star + S('M3 18L15 3', '#7d8ba4', 3) + S('M13 12h5M15.500 12v6M13 18h5', '#33508f', 1.2) + dots([[3, 18], [15, 3]]),
    poly: star + S('M5 12l3-7h9v8l-6 5', '#222', 1.2) + dots([[5, 12], [8, 5], [17, 5], [17, 13], [11, 18]]),
    support: star + dots([[12, 4], [13, 4]]) + F('M9 6h6l1 6 2 6H5l3-6z', '#4aa24a'),
    lsupport: star + S('M4 9h13', '#333', 1) + dots([[5, 8], [16, 8]]) + F('M5 11l3 6H2zM15 11l3 6h-6z', '#4aa24a'),
    ssupport: star + F('M3 10l9-4 7 5-9 5z', '#5f9bd0') + F('M3 11v3l7 5 9-5v-3l-9 5z', '#3b8b4c'),
    dim: star + S('M3 4v14M17 4v14M3 13h14', '#222', 1.3) + F('M3 13l4-2v4zM17 13l-4-2v4z', '#222') + '<text x="8" y="9" font-size="9" font-family="Liberation Serif">X</text>',
    dimx: star + '<text x="8" y="8" font-size="8" font-family="Liberation Serif">XX</text>' + S('M2 18L10 10h8M4 10v8M2 14h16', '#333', 1),
    section: star + S('M4 6h12v12H4z', '#777', 1) + S('M7 3v16M14 3v16M2 15h16', '#555', 1),
    surf: star + S('M5 8h12v9H5z', '#2b4b78', 1, '#7fb0e0') + dots([[5, 8], [17, 17], [5, 17]]),
    opening: S('M3.500 4.500h14v13h-14z', '#2b4b78', 1, '#7fb0e0') + S('M7 8h7v6H7z', '#c22', 1, '#fff') + dots([[7, 8], [14, 14], [14, 8], [7, 14]]) + '<g transform="scale(.7)">' + star + '</g>',
    sweep: S('M2 8h8v8H2zM10 8l7-4v9l-7 4z', '#2b4b78', 1, '#7fb0e0') + S('M13 2v16', '#333', 1),
    solid: S('M4 5l4-3h9v11l-3 5H5z', '#68778d', 1, '#c4d2e4') + F('M5 6h8v11H5z', '#9fb5cf'),
    solidset: star + S('M2.500 8.500h10v9h-10z', '#2b4b78', 1, '#7fb0e0') + S('M8 6l3-4h7v7l-3 3M8 6h7v6M15 6l3-4', '#333', 1),
    combi: S('M1.500 3.500h5v4h-5zM1.500 13.500h5v4h-5z', '#444', 1, '#fff') + S('M8 4q4 0 5 4M8 16q4 0 5-4', '#444', 1) + F('M11 7h8v6h-8z', '#3d7fd0'),
    nload: star + loadArrow + dots([[10, 18]]),
    lload: star + S('M4 8h13M5 8v8M10 8v8M16 8v8', '#4769b8', 1.5) + S('M3 17h15', '#c44', 1.5),
    sload: S('M5 3h10l2 14H3z', '#58729a', 1, '#aabfda') + S('M7 5v9M12 5v9', '#4769b8', 1.5) + '<g transform="scale(.7)">' + star + '</g>',
    cubeload: star + S('M5 10h9v8H5zM5 10l3-3h9l-3 3M17 7v8l-3 3', '#2a4266', 1, '#86aeda') + S('M12 1v6', '#2d50b0', 2),
    pan: F('M2 4l3 2V2l3 4 2-4 1 5 4-2-1 6 3 2-5 5H6z', '#6c5548') + S('M15 1v8M11 5h8', '#222', 1),
    zoomin: lens('#33508f') + S('M14 3h5M16.500 1v6', '#d22', 1) + S('M6 8h6M9 5v6', '#335', 1),
    zoomx: lens('#33508f') + S('M9 1l9 9M18 1l-9 9', '#d81818', 2.5),
    cube: S('M2 6h12v12H2zM2 6l4-4h12l-4 4M18 2v12l-4 4M6 2v12h12M6 14l-4 4', '#4b628f', 1.2, 'rgba(200,215,240,.4)'),
    cubes: S('M11 2h7v6l-2 2h-6V4z', '#4b628f', 1, '#d6e0f0') + S('M7 6h6v6l-2 2H5V8z', '#4b628f', 1, '#d6e0f0') + S('M2 11h6v7H2z', '#4b628f', 1, '#d6e0f0'),
    axx: axes('#2a9a2a', '#2848c8', 'X'),
    axy: S('M15 4v12', '#2848c8', 3) + S('M4 4h12', '#d01c1c', 3) + F('M12 14h6l-3 5z', '#2848c8') + F('M6 1v6L1 4z', '#d01c1c') + '<text x="3" y="18" font-size="11" font-family="Liberation Serif" fill="#111">Y</text>',
    axz: axes('#d01c1c', '#2a9a2a', 'Z'),
    axmx: S('M2 4h10', '#2a9a2a', 3) + S('M15 4v13', '#2848c8', 3) + dots([[15, 4]]) + '<text x="0" y="18" font-size="11" font-family="Liberation Serif">-X</text>',
    scope: S('M3 1l5 5M8 1L3 6', '#2f6fc0', 2) + S('M16 2L9 11', '#333', 4) + S('M6 11l8 6M4 18h13', '#444', 2.5),
    solidgrey: S('M3 7l6-4v6l8-3v7l-7 5-7-4z', '#222', 1, '#76849a') + S('M3 7l4 3v7M9 9l2 2 6-3', '#cdd6e4', 1),
    deform: S('M3 17L5 4l10 1 2 12', '#555', 1.3) + dots([[3, 17], [5, 4], [15, 5], [17, 17]]),
    cam: S('M3 6h12l3 3-2 5H5z', '#555', 1, '#b8bcc4') + S('M7 8h5v4H7z', '#444', 1, '#eee'),
    ibeam: beam + F('M8 18l10-6v6z', '#e05060') + F('M2 18v-4h8z', '#4769b8'),
    rainbow: F('M2 8l8-5 8 5-8 8z', '#e03030') + F('M3 9l8-4 6 4-7 6z', '#f5dc28') + F('M4 10l8-2 4 2-6 5z', '#35b545') + F('M6 12l8-1-4 5z', '#2050d0'),
    raincube: S('M3 5l5-3h9v11l-4 5H3z', '#347', 1, '#66b6d8') + '<circle cx="8" cy="11" r="5" fill="#5c5"/><circle cx="8" cy="11" r="3.500" fill="#fd3"/><circle cx="8" cy="11" r="2" fill="#e33"/>',
    greens: F('M6 1h4v4h2l-4 4-4-4h2zM12 5l6-3v6zM8 19v-5H6l3-4 3 4h-2v5z', '#3b9a3b'),
    leaf: S('M5 12Q8 3 18 2q-2 8-13 10z', '#556', 1, '#c5d2e6') + F('M8 18l10-5v5z', '#e05060') + F('M2 18v-3h8z', '#4769b8'),
    yellows: S('M2.500 3.500h6v5h-6zM11.500 3.500h6v5h-6zM2.500 12.500h6v5h-6zM11.500 12.500h6v5h-6z', '#5a4c08', 1.2, '#f2d02c'),
    idiag: beam + S('M2 16q4-7 8 0t8 0', '#d22', 1.2),
    tablegrid: S('M3 2.500h14v15H3zM3 6.500h14M3 10.500h14M3 14.500h14M10 2v16', '#667', 1, '#d9e2f2'),
    doc: S('M4.500 1.500h12v17h-12z', '#777', 1, '#fff') + S('M6 5h8M6 8h8M6 11h8M6 14h8', '#c84', 1) + F('M6 7h3v8H6z', '#5b9'),
    wand: star + S('M9 8l8-5', '#333', 2) + F('M8 9l10 8-3 2-9-6z', '#30343c'),
    colors: F('M2 2h14L8 12z', '#fff') + F('M2 3v5l9 10h6z', '#e02020') + F('M2 7v5l6 6h4z', '#f2e020') + F('M2 12v6h6z', '#20a030') + S('M18 2L9 12', '#333', 1.5),
    gtri: sheet + F('M4 17L16 6v11z', '#3ca848'),
    garrow: sheet + S('M7 7v8M5 12l2 3 2-3M12 8v5M10 10.500h5', '#2038a0', 1.5),
    gdown: sheet + F('M8 7h4v5h3l-5 6-5-6h3z', '#2a55b5'),
    gdiag: sheet + F('M3 14l7-3v3z', '#2038c0') + F('M17 7v4h-7z', '#d82020') + S('M2 16L18 6', '#222', 1),
    gred: sheet + S('M3 12l3-4 2 7 3-8 3 7 3-5', '#d33', 1.3),
    gleft: sheet + F('M3 11l6-5v3h7v4H9v3z', '#3c68c8'),
    gright: sheet + F('M17 11l-6-5v3H4v4h7v3z', '#3c68c8'),
    hook: S('M5 4q11-3 10 5-1 5-6 8', '#222', 4.5) + S('M5 4q11-3 10 5-1 5-6 8', '#9db4dc', 2) + S('M4 4h6v5', '#2d3c5e', 2),
    hookback: S('M17 3q-9-1-9 5 0 5 5 8', '#222', 4.5) + S('M17 3q-9-1-9 5 0 5 5 8', '#9db4dc', 2) + S('M17 11v6h-6', '#2d3c5e', 2),
    gblue: S('M2.500 3.500h15v13h-15z', '#33407f', 1, '#8f9fe0') + S('M2 7.500h16M2 11.500h16M7.500 3v14M12.500 3v14', '#eef', 1),
    gedit: sheet + S('M16 2l-6 11', '#c8b020', 2.5),
    filter: S('M2 6h12l-5 6v6H7v-6z', '#27457f', 1, '#86aee6') + S('M10 1.500h8v5h-8z', '#333', 1, '#fff'),
    infored: '<circle cx="13" cy="7" r="5.500" fill="#27407f"/>' + S('M13 6v4', '#fff', 2) + S('M2 10h6M5 10v8M2 18h6M8 15l4-3', '#c33', 1.5),
    bars: S('M4 2v16', '#333', 1.5) + S('M4 3.500h5v3H4zM4 8.500h8v3H4zM4 13.500h13v4H4z', '#333', 1, '#f6a838'),
    excel: S('M2.500 2.500h15v15h-15z', '#1c6b30', 1.5, '#e9f5ea') + S('M5 5l8 10M13 5L5 15', '#1c7b34', 3) + S('M14 6h3M14 10h3M14 14h3', '#1c6b30', 1),
    calcu: F('M2 5h16v13H2z', '#3b3f48') + F('M2 3h16v3H2z', '#8f96a4') + S('M4 10h12M4 13h12M4 16h12', '#dfe3ea', 1.5).replace('/>', ' stroke-dasharray="2 1.500"/>'),
    tabdata: S('M5.500 1.500h13v11h-13z', '#3d6fae', 1, '#dceafa') + F('M5 1h14v3H5z', '#3d8be0') + F('M0 4h5l1 2h4v8H0z', '#edbf3a') + '<circle cx="11" cy="12" r="4" fill="#eef6ff" stroke="#2d4d84" stroke-width="2"/>' + S('M14 15l4 4', '#2d4d84', 2.5),
    tabview: S('M2.500 5.500h14v13h-14z', '#2f5fb0', 1, '#f2f7ff') + F('M2 5h15v3H2z', '#3f78d0') + S('M5 11h9M5 14h9', '#89a', 1) + F('M7 1l9 1 3 3-7 4-4-2z', '#8a6248'),
    tabscope: S('M14 1L6 12', '#2b4f9c', 4) + S('M7 13h8M3 18h14', '#2b4f9c', 2) + S('M15 6q4 5-1 10', '#5578c0', 1.5),
    pvgrey: F('M2 3h9v6H2z', '#9b9b92') + S('M3 5h7M12 6h5M12 9h5M5 12h7', '#777', 1) + '<circle cx="14" cy="15" r="3" fill="#b0b0a8" stroke="#777"/>',
    pveye: F('M1 7h10v12H1z', '#93c4ef') + S('M1 4h5M13 10v9', '#f08a2c', 1.5) + S('M18 8v11', '#888', 1) + S('M6 5q7-7 13 0q-6 6-13 0z', '#223a80', 1.5, '#fff') + '<circle cx="12.500" cy="5" r="2.500" fill="#223a80"/>',
    pvzoom: S('M9 2l9 11M19 2L8 12M12 8l7 1', '#4a78c8', 2.5) + '<circle cx="6" cy="11" r="4.500" fill="none" stroke="#2a2a3a" stroke-width="2"/>' + S('M9 14l4 5', '#2a2a3a', 3),
    help: '<circle cx="10" cy="9" r="8" fill="#fff" stroke="#888" stroke-width="1.500"/><path d="M3 14v5l5-3z" fill="#888"/><text x="6" y="14" font-size="14" font-weight="bold" font-family="Liberation Serif" fill="#27407f">?</text>',
    units: F('M1 1h18v6H1z', '#57a845') + S('M3 4v3M6 5v2M9 4v3M12 5v2M15 4v3', '#1e5a18', 1) + '<text x="1" y="18" font-size="10" font-style="italic" font-weight="bold" font-family="Liberation Sans" fill="#111">0.<tspan fill="#27408f">00</tspan></text>'
};

const svg = body => `<svg viewBox="0 0 20 20">${body}</svg>`;

document.querySelectorAll('[data-tools]').forEach(el => {
    el.innerHTML = el.dataset.tools.trim().split(/\s+/).map(t => {
        if (t === '|') return '<span class="sep"></span>';
        if (t === 'v') return '<button class="drop" aria-label="Options"></button>';
        const cls = t[0] === '*' ? ' on' : t[0] === '~' ? ' off' : '';
        const name = t.replace(/^[*~]/, '');
        return `<button class="tool${cls}" aria-label="${name}">${svg(icons[name])}</button>`;
    }).join('');
});

document.querySelectorAll('[data-icon]').forEach(el => {
    el.innerHTML = svg(icons[el.dataset.icon]);
});

// navigator tree
const folder = '<path d="M1.500 3.500l1-1.500h4.500l1 1.500h7.500v10.500h-14z" fill="#e8c832" stroke="#8a7420"/><path d="M2 5h13v2H2z" fill="#fbee94"/><path d="M2.500 14.500h13.500V5" stroke="#6b5a18" fill="none"/>';
const folderOpen = '<path d="M2 13.500L2.500 3l1-1.500h4l1 1.500h6v10.500z" fill="#b59a24" stroke="#7c6818"/><path d="M0 6h12l3 8H3z" fill="#e3c534" stroke="#8a7420" stroke-width=".8"/>';
const smallDots = pts => dots(pts).replace(/width="3" height="3"/g, 'width="2" height="2"');
const marks = {
    node: dots([[8.5, 9]]),
    line: S('M4 13l9-8', '#333', 1) + smallDots([[4, 13], [13, 5]]),
    mat: F('M6 6h4v6H6z', '#2a60c8') + F('M5 9h4v3H5z', '#d33') + F('M9 8h4v4H9z', '#3a4'),
    surf: F('M4 10l4-4 5 2-3 4z', '#3f78c8'),
    solid: S('M5 6h6v6H5zM5 6l2-2h6l-2 2M13 4v6l-2 2', '#2c4a78', .8, '#6fa0d8'),
    open: S('M5 6h7v6H5z', '#34527f', 2, '#e9d470'),
    sup: dots([[8, 5]]) + F('M7 7h3l2 5H5z', '#2c8a34'),
    lsup: S('M4 7h9', '#922', 1.5) + F('M5 8l2 4H3zM12 8l2 4h-4z', '#2c8a34'),
    ssup: F('M4 6h9l-2 6H6z', '#256a50') + F('M4 6h9v2H4z', '#3f78c8'),
    hinge: F('M4 7h5v4H4zM9 9h5v3H9z', '#fff') + S('M6 11l6-4', '#36a', 1),
    thick: F('M4 9l3-3 7 1-3 4z', '#2f62b0'),
    ortho: F('M4 9l3-3 7 1-3 4z', '#c33a6a') + F('M6 7l7 0-2 2z', '#2f62b0'),
    sect: F('M7 5h7l-3 8H5z', '#6a86e8') + S('M4 5h4M6 5v7M4 12h4', '#c33', 1.2),
    bhinge: S('M4 9h10M5 6v6', '#6b4a14', 1.5),
    ecc: S('M4 12l7-7M7 13l6-6', '#887', 1.5),
    div: S('M4 13l9-8', '#444', 2) + S('M7 8l3 3', '#fff', 1),
    bar: S('M4 13l9-8', '#6b6b4a', 2),
    rib: F('M4 9q4-4 9 0-4 3-9 0z', '#999980'),
    found: S('M4 7h9', '#c33', 1.5) + F('M5 8h2v4H5zM8 8h2v4H8zM11 8h2v4h-2z', '#2c8a34'),
    nonlin: S('M9 4v9', '#c33', 1.5).replace('/>', ' stroke-dasharray="2 1"/>'),
    sets: S('M4 13l6-8 3 8M6 9l6-1', '#7a5a2a', 1.2) + smallDots([[10, 5], [5, 12]]),
    inter: F('M4 8l5-3 4 4-5 4z', '#3f78c8') + dots([[9, 9]], '#123'),
    refine: S('M5 5h8v7H5zM9 5v7M5 8h8', '#345', 1, '#8fb4d8'),
    rel: F('M4 8l8-3 2 3-8 4z', '#5f9ee0') + F('M5 11l8-2v2l-7 2z', '#b8d6f4'),
    nodal: S('M4 5l9 8M13 5l-9 8', '#c22', 1.8)
};
const treeIcon = name => {
    if (name === 'folder') return folder;
    if (name === 'openf') return folderOpen;
    if (name === 'case') return S('M11.500 2v6', '#456', 2) + F('M9 7h6l-3 5z', '#4769b8') + S('M1 13.500h14', '#333', 1);
    if (name === 'combg' || name === 'combb') return S('M1 1.500h4v3H1zM1 11.500h4v3H1z', '#444', 1, '#fff') + S('M6 3q5 0 6 3M6 13q5 0 6-3', '#444', 1) + F('M10 5h6v6h-6z', name === 'combg' ? '#1fae3a' : '#3d7fd8');
    if (name === 'module') return S('M1 1h14v14H1z', '#8c8cf0', 2, '#fff') + F('M3 11l3-5h7l-2 5z', '#2aa0c0') + F('M6 6h7l-1 2H5z', '#333');
    return folder + marks[name];
};

// depth, toggle (+, -, or none), icon, label
const nodes = `0|-|openf|Données de modèle
1|+|node|Nœuds
1|+|line|Lignes
1|+|mat|Matériaux
1|+|surf|Surfaces
1||solid|Solides
1||open|Ouvertures
1|+|sup|Appuis nodaux
1||lsup|Appuis linéiques
1||ssup|Appuis de surface
1||hinge|Articulations linéiques
1||thick|Épaisseurs variables
1|+|ortho|Surfaces et membranes orthotro
1|+|sect|Sections
1||bhinge|Articulations de barre
1||ecc|Excentrement de barre
1||div|Divisions de barre
1|+|bar|Barres
1||rib|Nervures
1||found|Fondations élastiques de barre
1||nonlin|Non-linéarités de barre
1||sets|Ensembles de barres
1||inter|Intersections des surfaces
1||refine|Raffinement de maillage EF
1||folder|Libérations nodales
1||folder|Types de libération linéique
1||hinge|Libérations linéiques
1||rel|Types de libération de surface
1||rel|Libérations de surface
1||folder|Connexion des deux barres
1||folder|Assemblages
1||nodal|Connexions nodaux
1|-|openf|Modèles types de découpage
2||folder|1: 1,4,12
2||folder|2: 1,4,12,13
2||folder|3: 1,4,13,14
2||folder|4: 1,4,5,14
2||folder|5: 2,3,5,15
2||folder|6: 2,3,15,16
2||folder|7: 2,3,16,17
2||folder|8: 2,3,17
0|-|openf|Cas de charge et combinaisons
1|+|case|Cas de charge
1|+|combg|Combinaisons de charge
1||combb|Combinaisons de résultats
0|+|folder|Charges
0|+|folder|Résultats
0||folder|Coupes
0||folder|Régions moyennes
0|+|folder|Rapports d'impression
0|+|folder|Objets auxiliaires
0|-|openf|Modules additionnels
1|-|openf|Favoris
2||module|RF-STEEL Surfaces - Analyse`.split('\n').map(l => l.split('|'));

// does the given level go on below row i?
function goesOn(i, level) {
    for (let j = i + 1; j < nodes.length; j++) {
        if (+nodes[j][0] < level) return false;
        if (+nodes[j][0] === level) return true;
    }
    return true;
}

document.getElementById('tree').innerHTML = nodes.map(([d, toggle, icon, label], i) => {
    const depth = +d;
    let guides = '';
    for (let k = 0; k <= depth; k++) {
        const on = goesOn(i, k);
        const line = on ? 'through' : k === depth ? 'end' : '';
        const btn = k === depth && toggle ? `<button class="toggle${toggle === '+' ? ' plus' : ''}" aria-label="${label}"></button>` : '';
        guides += `<span class="guide ${line}${k === depth ? ' branch' : ''}">${btn}</span>`;
    }
    return `<div class="node" role="treeitem">${guides}<svg viewBox="0 0 17 16">${treeIcon(icon)}</svg><span>${label}</span></div>`;
}).join('');

// pattern points
const points = [[0.789, -1.788], [0.801, -1.314], [0.802, -1.245], [0.809, -0.733], [0.810, -0.702], [0.810, -0.669], [0.813, -0.419],
    [0.813, -0.203], [0.813, -0.141], [0.813, -0.068], [0.813, 0.133], [0.812, 0.294], [0.812, 0.404], [0.811, 0.542], [0.808, 0.776],
    [0.802, 1.181], [0.801, 1.247], [0.797, 1.371], [0.789, 1.719], [0.693, 1.799], [0.340, 2.121]];
document.getElementById('points').innerHTML = points.map((p, i) =>
    `<tr${i === 4 ? ' class="alt"' : ''}><th${i === 0 ? ' class="sel"' : ''}>${i + 1}</th><td${i === 0 ? ' class="focus"' : ''}>${p[0].toFixed(3)}</td><td>${p[1].toFixed(3)}</td><td></td></tr>`).join('');

const axisCross = (x, y) =>
    S(`M${x} ${y}h30`, '#ff0000', 2) + F(`M${x + 27} ${y - 3}v6l14-3z`, '#b00000') +
    S(`M${x} ${y}v30`, '#00ff00', 2) + F(`M${x - 3} ${y + 28}h6l-3 13z`, '#00b400') +
    F(`M${x - 3} ${y - 3}h6v6h-6z`, '#0000c0') +
    `<text class="axis-text" x="${x + 50}" y="${y + 4}" fill="#d00000">X</text><text class="axis-text" x="${x}" y="${y + 51}" fill="#00e000">Y</text>`;

// shade sail model: the lower and right edges mirror the upper and left ones about the centre
const upper = [[353, 162], [394, 176.5], [436, 189], [477.5, 200.5], [519.5, 209.5], [562, 217.5], [604.5, 223.5], [647, 227.5], [689.5, 230], [732, 231],
    [774.5, 230], [817, 227], [859.5, 223], [901.5, 217], [943.5, 209], [986, 199.5], [1028, 188], [1070, 174.5]];
const left = [[353, 162], [367.5, 203], [380.5, 244.5], [391.5, 286.5], [401, 328.5], [408.5, 371], [414.5, 413.5], [419, 456], [421.5, 498.5], [422, 541],
    [421, 583.5], [418.5, 626], [414.5, 668], [408, 710.5], [400, 753], [390.5, 795], [379.5, 837], [366, 879.5]];
const turn = p => [1436 - p[0], 1054 - p[1]];
const bottom = upper.map(turn).reverse();
const right = left.map(turn).reverse();
const n = 17;

function meshNode(i, j) {
    const u = i / n, v = j / n;
    const c = [0, 1].map(k =>
        (1 - v) * upper[i][k] + v * bottom[i][k] + (1 - u) * left[j][k] + u * right[j][k]
        - (1 - u) * (1 - v) * upper[0][k] - u * (1 - v) * upper[n][k] - (1 - u) * v * bottom[0][k] - u * v * bottom[n][k]);
    const edge = Math.min(i, j, n - i, n - j);
    const amp = Math.min(edge, 4) * 1.8 * (1 - Math.abs(u + v - 1) * 0.5);
    return [c[0] + amp * Math.sin(i * 12.9 + j * 78.2), c[1] + amp * Math.sin(i * 39.3 + j * 11.1)];
}

let mesh = '';
const seg = (a, b) => `M${a[0].toFixed(1)} ${a[1].toFixed(1)}L${b[0].toFixed(1)} ${b[1].toFixed(1)}`;
for (let i = 0; i <= n; i++) {
    for (let j = 0; j <= n; j++) {
        if (i < n && j > 0 && j < n) mesh += seg(meshNode(i, j), meshNode(i + 1, j));
        if (j < n && i > 0 && i < n) mesh += seg(meshNode(i, j), meshNode(i, j + 1));
        if (i < n && j < n) {
            const back = Math.hypot(n - i, j) < 9 || Math.hypot(i, n - j) < 9 || (i * 7 + j * 5) % 11 === 0;
            mesh += back ? seg(meshNode(i + 1, j), meshNode(i, j + 1)) : seg(meshNode(i, j), meshNode(i + 1, j + 1));
        }
    }
}

const poly = pts => 'M' + pts.map(p => p.join(' ')).join('L');
const knots = pts => pts.map(p => `<circle cx="${p[0]}" cy="${p[1]}" r="3" fill="#800080"/>`).join('');
const supports = [[353, 162], [1083, 162], [1266, 162], [353, 892], [1083, 892]];
const edgeLine = (pts, color) => `<path d="${poly(pts)}" stroke="#aaa" fill="none"/><path d="${poly(pts)}" stroke="${color}" stroke-width="2" stroke-dasharray="16 4 1 4" fill="none"/>`;
const ball = (x, y, c = '#00ffff') => `<circle cx="${x}" cy="${y}" r="4" fill="${c}"/>`;
const cut = d => S(d, '#00ffff', 2);
const cutRed = d => S(d, '#00ffff', 2) + `<path d="${d}" stroke="#ff0000" stroke-width="2" stroke-dasharray="17 5" fill="none"/>`;

document.getElementById('model').innerHTML = '<g transform="translate(-283 -102)">' +
    S('M353.500 162V892M353 161.500H1083M1083.500 102V892M283 892.500H1083', '#ececfa', 1) +
    `<path d="${mesh}" stroke="#a8a8a8" stroke-dasharray="1 2" fill="none" shape-rendering="crispEdges"/>` +
    '<path d="M1070 174L1266 162M1070 174L1075 102M366 880L283 885M366 880L362 945" stroke="#888" stroke-dasharray="1 2" fill="none"/>' +
    supports.map(p => `<rect x="${p[0] - 8}" y="${p[1] - 8}" width="16" height="16" fill="#40ff40"/>`).join('') +
    S('M1070 174l13-12M366 880l-13 12', '#dcb8dc', 5) +
    knots([...upper, ...left, ...bottom, ...right, [1083, 162], [1266, 162], [1119.5, 171.5], [1168.5, 168], [1217.5, 165], [1073.5, 126], [317, 882.5], [362.5, 928]]) +
    edgeLine(upper, '#00ffff') + edgeLine(right, '#00ffff') +
    edgeLine([...left.slice(0, 6), [413.5, 405]], '#00ffff') +
    edgeLine([[413.5, 405], ...left.slice(6, 11), [420.5, 594.5]], '#ff0000') +
    edgeLine([[420.5, 594.5], ...left.slice(11)], '#00ffff') +
    edgeLine([...bottom.slice(0, 7), [651, 824.5]], '#00ffff') +
    edgeLine([[651, 824.5], ...bottom.slice(7, 12), [839, 831]], '#ff0000') +
    edgeLine([[839, 831], ...bottom.slice(12)], '#00ffff') +
    cut('M353 162L1083 892') + cut('M596 221.500L1023 648') + cut('M786 229L1016.500 459.500') + cut('M948 208.500L1037 298') + cut('M399.500 756L490 846') +
    '<path d="M948 208.500L1037 298" stroke="#000" stroke-dasharray="3 20" stroke-dashoffset="-10" fill="none"/>' +
    cutRed('M413.500 405L839 831') + cutRed('M420.500 594.500L651 824.500') +
    ball(1018, 227.5) + ball(939.5, 305.5) + ball(849, 395.5) + ball(758, 486.5) + ball(677.5, 567) + ball(586.5, 658.5, '#ff0000') + ball(497, 748) + ball(418.5, 826.5) +
    '<circle cx="1083" cy="892" r="3" fill="#008c8c"/>' +
    axisCross(338, 820) + axisCross(353, 892) + '</g>';

document.getElementById('pattern').innerHTML = '<g transform="translate(-1484 -353)">' +
    S('M1671.500 352V427M1671.500 751V827M1483 591.500H1632M1724 591.500H1868', '#45a5a5', 1.5) +
    S('M1626.500 377.500Q1674 432 1723 475.500Q1726 592 1723 703Q1674 744 1626.500 801.500Q1638 592 1626.500 377.500z', '#00ffff', 2) +
    F('M1750 444l5 4.500-15.500 15 5.500 5-17 2.500 1-17.500 6 5z', '#ff0000') +
    F('M1721 474h4v4h-4z', '#ff0000') + axisCross(1671, 592) + '</g>';
```
